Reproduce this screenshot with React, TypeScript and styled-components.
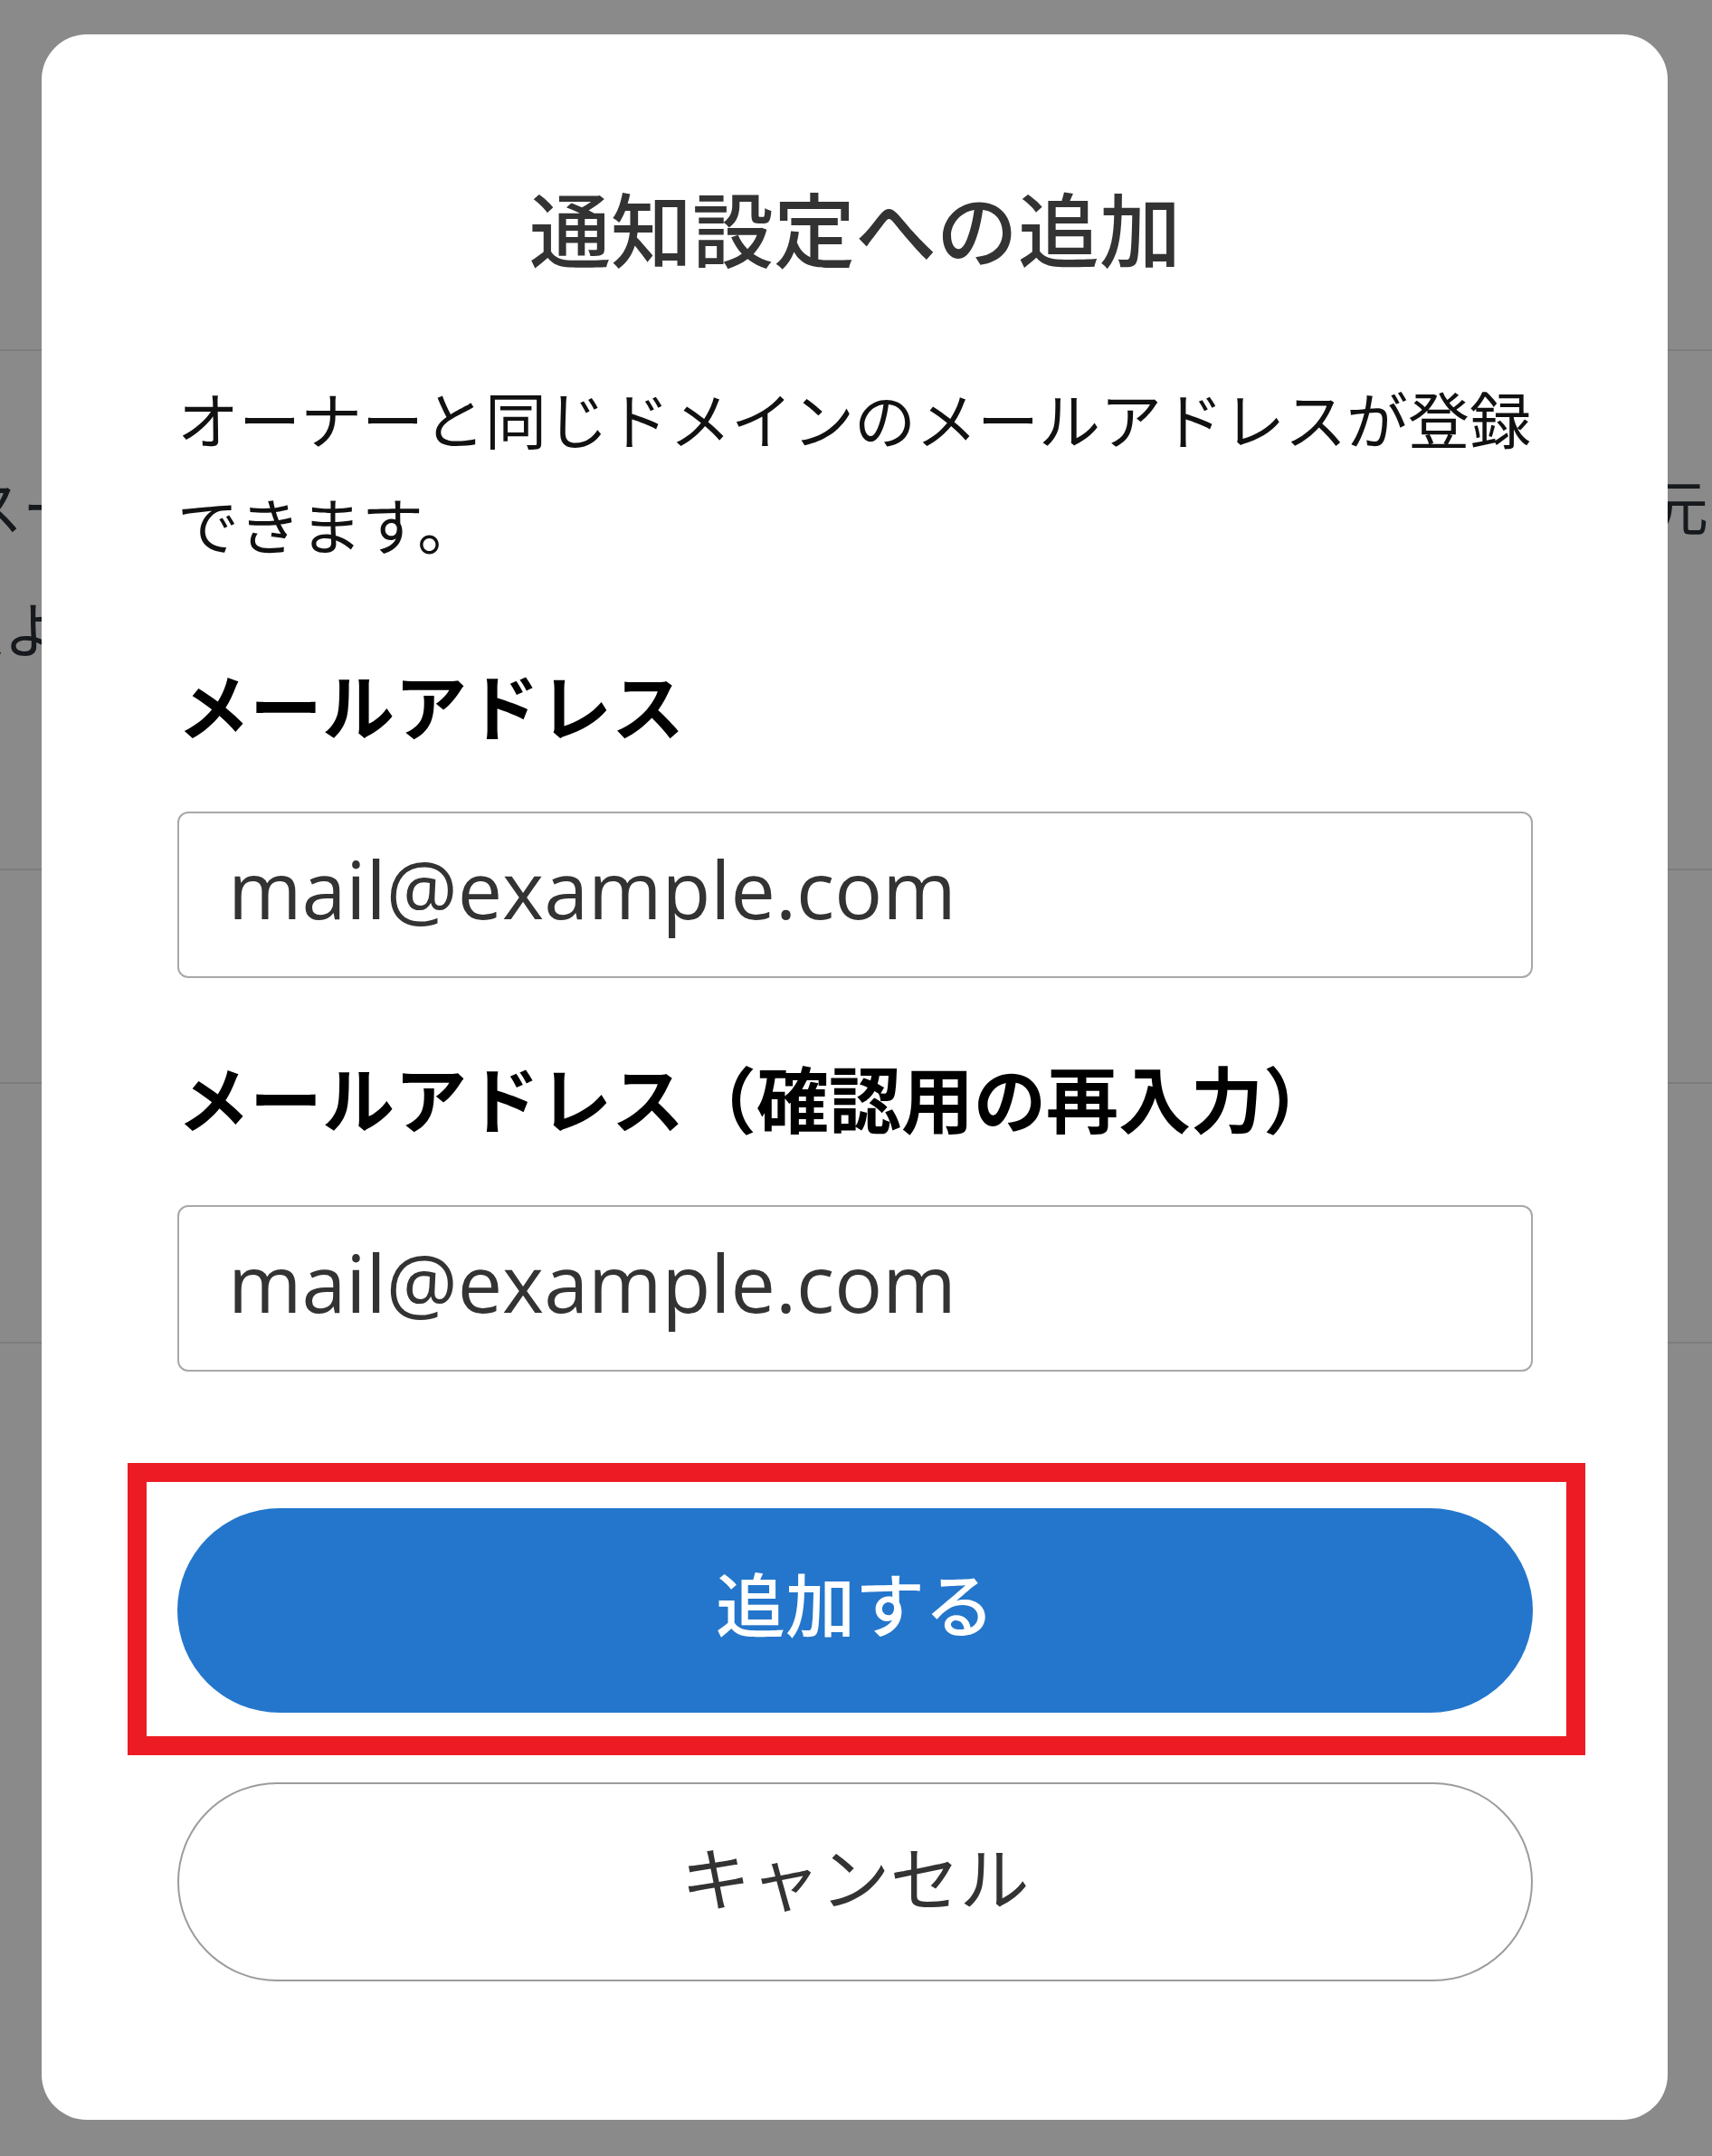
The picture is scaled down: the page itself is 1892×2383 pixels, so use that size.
import React from "react";
import styled, { createGlobalStyle } from "styled-components";

const GlobalStyle = createGlobalStyle`
  html, body { margin: 0; padding: 0; background: #ffffff; }
  body { font-family: "Noto Sans CJK JP", "Noto Sans", sans-serif; }
  * { box-sizing: border-box; }
`;

const JP = `"Noto Sans CJK JP", "Noto Sans", sans-serif`;

const Page = styled.div`
  position: relative;
  width: 1892px;
  height: 2383px;
  overflow: hidden;
  background: #ffffff;
`;

/* ---------- page behind the dialog ---------- */
const Backdrop = styled.div`
  display: flex;
  flex-direction: column;
  width: 100%;
`;

const BgBlock = styled.div<{ $h: number }>`
  height: ${(p) => p.$h}px;
  border-bottom: 2px solid #e6e6e6;
`;

const BgSection = styled.div`
  height: 574px;
  padding-top: 102px;
  border-bottom: 2px solid #e6e6e6;
  display: flex;
  flex-direction: column;
`;

const BgLine = styled.div`
  display: flex;
  justify-content: space-between;
  font-family: ${JP};
  font-size: 66px;
  line-height: 135px;
  color: #2a2f38;
  white-space: nowrap;
`;

const BgLeft = styled.span<{ $shift: number }>`
  margin-left: ${(p) => p.$shift}px;
`;

const BgRight = styled.span`
  margin-right: -62px;
`;

/* ---------- dialog ---------- */
const Overlay = styled.div`
  position: absolute;
  inset: 0;
  background: rgba(0, 0, 0, 0.46);
  padding: 38px 49px 40px 46px;
  display: flex;
`;

const Modal = styled.div`
  flex: 1;
  background: #ffffff;
  border-radius: 50px;
  padding: 149px 149px 152px 150px;
  display: flex;
  flex-direction: column;
`;

const Title = styled.h2`
  margin: 0;
  font-family: ${JP};
  font-size: 90px;
  line-height: 126px;
  font-weight: 500;
  color: #333333;
  text-align: center;
`;

const Description = styled.p`
  margin: 90px 0 0;
  font-family: ${JP};
  font-size: 68px;
  line-height: 117px;
  font-weight: 400;
  color: #111111;
`;

const Label = styled.label<{ $gap: number }>`
  display: block;
  margin-top: ${(p) => p.$gap}px;
  font-family: ${JP};
  font-size: 80px;
  line-height: 110px;
  font-weight: 700;
  color: #000000;
  white-space: nowrap;
`;

const Input = styled.input<{ $gap: number }>`
  display: block;
  width: 100%;
  height: 184px;
  margin-top: ${(p) => p.$gap}px;
  padding: 0 50px 14px 54px;
  border: 2px solid #a8a8a8;
  border-radius: 12px;
  background: #ffffff;
  font-family: "Open Sans", "Noto Sans", sans-serif;
  font-size: 88px;
  color: #333333;
  outline: none;
  &::placeholder {
    color: #333333;
    opacity: 1;
  }
`;

const Highlight = styled.div`
  position: relative;
  margin-top: 151px;
  &::after {
    content: "";
    position: absolute;
    top: -50px;
    left: -55px;
    right: -58px;
    bottom: -47px;
    border: 21px solid #ed1c24;
    pointer-events: none;
  }
`;

const PillButton = styled.button<{ $primary?: boolean }>`
  display: flex;
  align-items: center;
  justify-content: center;
  width: 100%;
  height: ${(p) => (p.$primary ? 226 : 220)}px;
  margin: 0;
  padding: 0 0 ${(p) => (p.$primary ? 20 : 16)}px;
  border-radius: 120px;
  border: ${(p) => (p.$primary ? "none" : "2px solid #9c9c9c")};
  background: ${(p) => (p.$primary ? "#2376cb" : "#ffffff")};
  color: ${(p) => (p.$primary ? "#ffffff" : "#333333")};
  font-family: ${JP};
  font-size: 77px;
  font-weight: ${(p) => (p.$primary ? 500 : 400)};
  line-height: 1;
  cursor: pointer;
`;

const CancelWrap = styled.div`
  margin-top: 77px;
`;

export default function App() {
  return (
    <>
      <GlobalStyle />
      <Page>
        <Backdrop>
          <BgBlock $h={388} />
          <BgSection>
            <BgLine>
              <BgLeft $shift={-41}>スー</BgLeft>
              <BgRight>元に</BgRight>
            </BgLine>
            <BgLine>
              <BgLeft $shift={-128}>設定よ</BgLeft>
            </BgLine>
          </BgSection>
          <BgBlock $h={236} />
          <BgBlock $h={287} />
        </Backdrop>

        <Overlay>
          <Modal>
            <Title>通知設定への追加</Title>
            <Description>
              オーナーと同じドメインのメールアドレスが登録できます。
            </Description>

            <Label $gap={85} htmlFor="mail">
              メールアドレス
            </Label>
            <Input id="mail" $gap={65} type="email" placeholder="mail@example.com" />

            <Label $gap={75} htmlFor="mail-confirm">
              メールアドレス（確認用の再入力）
            </Label>
            <Input
              id="mail-confirm"
              $gap={66}
              type="email"
              placeholder="mail@example.com"
            />

            <Highlight>
              <PillButton $primary type="button">
                追加する
              </PillButton>
            </Highlight>

            <CancelWrap>
              <PillButton type="button">キャンセル</PillButton>
            </CancelWrap>
          </Modal>
        </Overlay>
      </Page>
    </>
  );
}
